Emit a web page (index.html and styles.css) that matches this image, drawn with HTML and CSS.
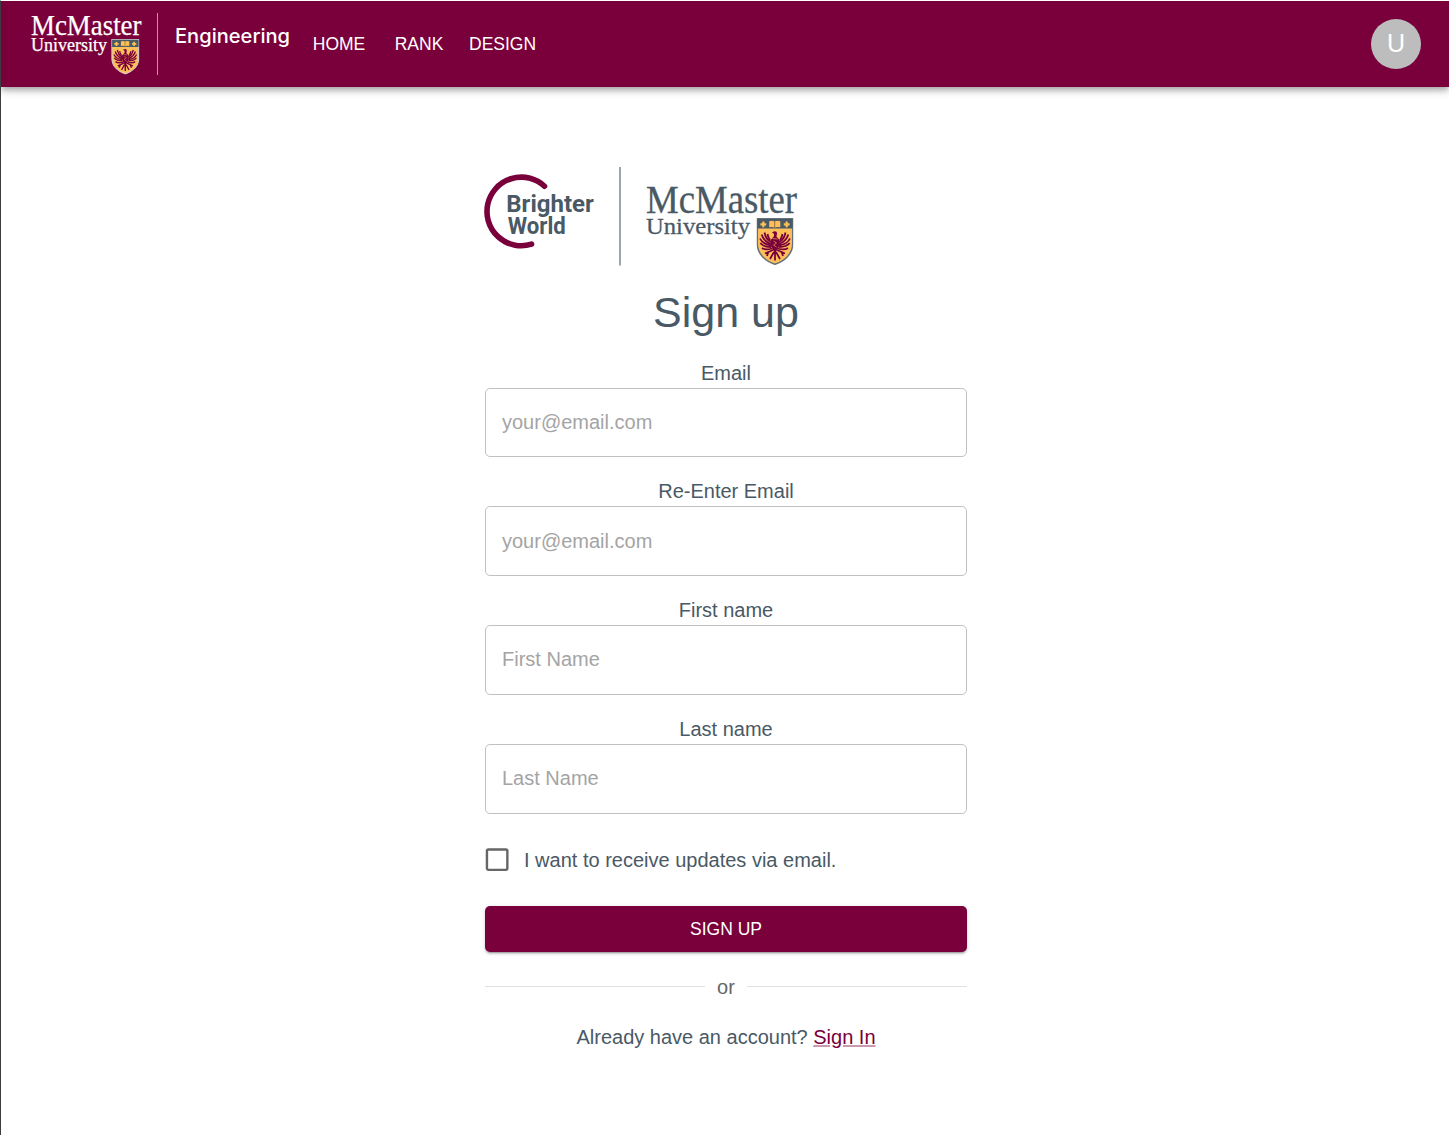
FILE: index.html
```html
<!DOCTYPE html>
<html lang="en">
<head>
<meta charset="utf-8">
<title>Sign up</title>
<link rel="stylesheet" href="styles.css">
</head>
<body>
<svg class="sprite" aria-hidden="true">
  <symbol id="crest" viewBox="0 0 37 47">
    <path class="crest-body" d="M.8.8H36.2V26C36.2 36 28 43 18.500 46.200C9 43 .8 36 .8 26Z"/>
    <path class="crest-band" d="M1 1H36V10.500H1Z"/>
    <path class="crest-gold" d="M12.700 3.200Q15.500 2.300 18.200 3.400Q21 2.300 23.800 3.200V9.300Q21 8.700 18.200 9.500Q15.500 8.700 12.700 9.300Z"/>
    <path class="crest-cross" d="M6.800 3.500V9.300M3.900 6.400H9.700M30.200 3.500V9.300M27.300 6.400H33.100"/>
    <path class="crest-page" d="M18.200 3.400V9.500"/>
    <g class="crest-eagle">
      <path class="crest-fill" d="M15.500 14.300L18 13.200Q20.600 13 20.600 15.500L19.900 18.500L23 22Q23.500 28 20.500 32L18.500 35L16.500 32Q13.500 28 14 22L17.300 18.500L17.600 16Z"/>
      <path d="M14.500 24Q9 21 8 14.500M14.500 26Q7 23 5.200 16.500M14.500 27.500Q6 26 3.500 20.500M14.500 29Q7 29 3.800 25M15.500 30.500Q9 32.500 5.500 30M22.500 24Q28 21 29 14.500M22.500 26Q30 23 31.800 16.500M22.500 27.500Q31 26 33.500 20.500M22.500 29Q30 29 33.200 25M21.500 30.500Q28 32.500 31.500 30"/>
      <path d="M16.500 32L8.500 35.500M12 33.500L10.500 38M20.500 32L28.500 35.500M25 33.500L26.500 38M18.500 33V42.500M17.500 34L13.500 41M19.500 34L23.500 41M13.500 22Q11.500 19 11 16M23.500 22Q25.500 19 26 16"/>
    </g>
    <path class="crest-detail" d="M17 23L20 25L17 27L20 29M16 20.500L21 21"/>
  </symbol>
</svg>

<div class="page">
  <header class="appbar">
    <svg class="brand" width="266" height="64" viewBox="30 12 266 64" role="img" aria-label="McMaster University Engineering">
      <text class="serif on-dark" x="31" y="35.300" font-size="29" textLength="110.500" lengthAdjust="spacingAndGlyphs">McMaster</text>
      <text class="serif on-dark" x="31" y="51" font-size="18" textLength="76" lengthAdjust="spacingAndGlyphs">University</text>
      <use class="crest-light" href="#crest" x="111" y="39" width="28.600" height="35.500"/>
      <path class="brand-rule" d="M157.500 13V75"/>
      <text class="faculty" x="175" y="42.500" font-size="20" textLength="115" lengthAdjust="spacingAndGlyphs">Engineering</text>
    </svg>
    <nav class="nav">
      <a class="nav-link">HOME</a>
      <a class="nav-link">RANK</a>
      <a class="nav-link">DESIGN</a>
    </nav>
    <div class="avatar">U</div>
  </header>

  <main class="signup">
    <svg class="logo" width="314" height="100" viewBox="485 167 314 100" role="img" aria-label="Brighter World, McMaster University">
      <path class="arc" d="M544.500 186.200A34.300 34.300 0 1 0 531.500 244.200"/>
      <text class="tagline" x="506.300" y="212" font-size="23" textLength="87.500" lengthAdjust="spacingAndGlyphs">Brighter</text>
      <text class="tagline" x="507.800" y="234" font-size="23" textLength="58" lengthAdjust="spacingAndGlyphs">World</text>
      <path class="logo-rule" d="M620 167V265.500"/>
      <text class="serif on-light" x="646" y="212.600" font-size="39" textLength="151" lengthAdjust="spacingAndGlyphs">McMaster</text>
      <text class="serif on-light" x="646" y="234" font-size="24" textLength="104" lengthAdjust="spacingAndGlyphs">University</text>
      <use class="crest-slate" href="#crest" x="756.500" y="218" width="37" height="47"/>
    </svg>
    <h1 class="title">Sign up</h1>
    <form class="form">
      <div class="field"><label class="label" for="email">Email</label><input class="input" id="email" type="text" placeholder="your@email.com"></div>
      <div class="field"><label class="label" for="email2">Re-Enter Email</label><input class="input" id="email2" type="text" placeholder="your@email.com"></div>
      <div class="field"><label class="label" for="first">First name</label><input class="input" id="first" type="text" placeholder="First Name"></div>
      <div class="field"><label class="label" for="last">Last name</label><input class="input" id="last" type="text" placeholder="Last Name"></div>
      <label class="check">
        <input class="check-input" type="checkbox">
        <svg class="box" width="24" height="24" viewBox="0 0 24 24" aria-hidden="true"><rect x="1.950" y="1.450" width="20.400" height="20.400" rx="1.500"/></svg>
        <span>I want to receive updates via email.</span>
      </label>
      <button class="submit" type="button">SIGN UP</button>
    </form>
    <div class="divider"><span>or</span></div>
    <p class="footnote">Already have an account? <a class="link">Sign In</a></p>
  </main>
</div>
</body>
</html>
```
FILE: styles.css
```css
* { box-sizing: border-box; }

body {
  margin: 0;
  background: #fff;
  color: #495965;
  font: 20px/23px "Liberation Sans", Arial, sans-serif;
}

.sprite { display: none; }

.page {
  height: 1135px;
  border-top: 1px solid #fff;
  border-left: 1px solid #3b3d40;
  overflow: hidden;
}

.appbar {
  display: flex;
  align-items: center;
  height: 86px;
  padding: 0 28px 0 29px;
  background: #7a003c;
  box-shadow: 0 2.5px 5px -1px rgba(0,0,0,.2), 0 5px 6px rgba(0,0,0,.14), 0 1px 12px rgba(0,0,0,.12);
}

.brand { flex: none; overflow: visible; }
.serif { font-family: "Liberation Serif", "Times New Roman", serif; }
.on-dark { fill: #fff; stroke: #fff; stroke-width: .25; }
.on-light { fill: #495965; stroke: #495965; stroke-width: .3; }
.faculty { font-family: Inter, sans-serif; font-weight: 500; fill: #fff; }
.brand-rule { stroke: #c68ea8; stroke-width: 1; }

.arc { fill: none; stroke: #7a003c; stroke-width: 5.6; stroke-linecap: round; }
.tagline { font-family: Roboto, sans-serif; font-weight: 700; fill: #495965; }
.logo-rule { stroke: #929ca4; stroke-width: 1.8; }

.crest-light { color: #d3ccd0; }
.crest-slate { color: #64707a; }
.crest-body { fill: #fdbf57; stroke: currentColor; stroke-width: 1.5; }
.crest-band { fill: #495965; }
.crest-gold { fill: #fdbf57; }
.crest-cross { stroke: #fdbf57; stroke-width: 2.2; }
.crest-page { stroke: #7a5a3c; stroke-width: .8; }
.crest-eagle { fill: none; stroke: #7a003c; stroke-width: 1.8; }
.crest-fill { fill: #7a003c; stroke: none; }
.crest-detail { fill: none; stroke: #fdbf57; stroke-width: .6; }

.nav { display: flex; margin-left: 3px; }
.nav-link {
  min-width: 80px;
  padding: 0 10px;
  color: #fff;
  font-size: 17.5px;
  text-align: center;
}

.avatar {
  width: 50px;
  height: 50px;
  margin-left: auto;
  border-radius: 50%;
  background: #bdbdbd;
  color: #fff;
  font-size: 25px;
  line-height: 49px;
  text-align: center;
}

.signup {
  display: flex;
  flex-direction: column;
  width: 482px;
  margin: 80px 0 0 484px;
}

.logo { display: block; overflow: visible; }

.title {
  margin: 20px 0 0;
  height: 73.6px;
  font-size: 43px;
  font-weight: 400;
  line-height: 50px;
  text-align: center;
}

.form { display: flex; flex-direction: column; }

.field { display: flex; flex-direction: column; height: 118.75px; }
.label { height: 27px; padding-top: 1px; text-align: center; }

.input {
  width: 100%;
  height: 69.7px;
  padding: 0 16px;
  border: 1px solid #c1c1c1;
  border-radius: 5px;
  background: transparent;
  color: #495965;
  font: inherit;
}
.input::placeholder { color: #a4a4a4; opacity: 1; }

.check {
  display: flex;
  align-items: center;
  height: 24px;
  margin-top: 13.4px;
}
.check-input { appearance: none; width: 0; height: 0; margin: 0; }
.box { flex: none; margin: -1px 15px 0 0; fill: none; stroke: #666; stroke-width: 2.4; }

.submit {
  height: 46px;
  margin-top: 33px;
  padding: 1px 0 0;
  border: 0;
  border-radius: 5px;
  background: #7a003c;
  box-shadow: 0 3px 1px -2px rgba(0,0,0,.2), 0 2px 2px rgba(0,0,0,.14), 0 1px 5px rgba(0,0,0,.12);
  color: #fff;
  font: 17.5px "Liberation Sans", Arial, sans-serif;
}

.divider {
  display: flex;
  align-items: center;
  gap: 12px;
  height: 23px;
  margin-top: 23px;
  color: #666;
}
.divider span { padding-top: 2px; }
.divider::before, .divider::after {
  content: "";
  flex: 1;
  height: 1px;
  background: #e0e0e0;
}

.footnote { margin: 28px 0 0; text-align: center; }
.link {
  color: #7a003c;
  text-decoration: underline;
  text-decoration-color: #ca99b1;
}
```
